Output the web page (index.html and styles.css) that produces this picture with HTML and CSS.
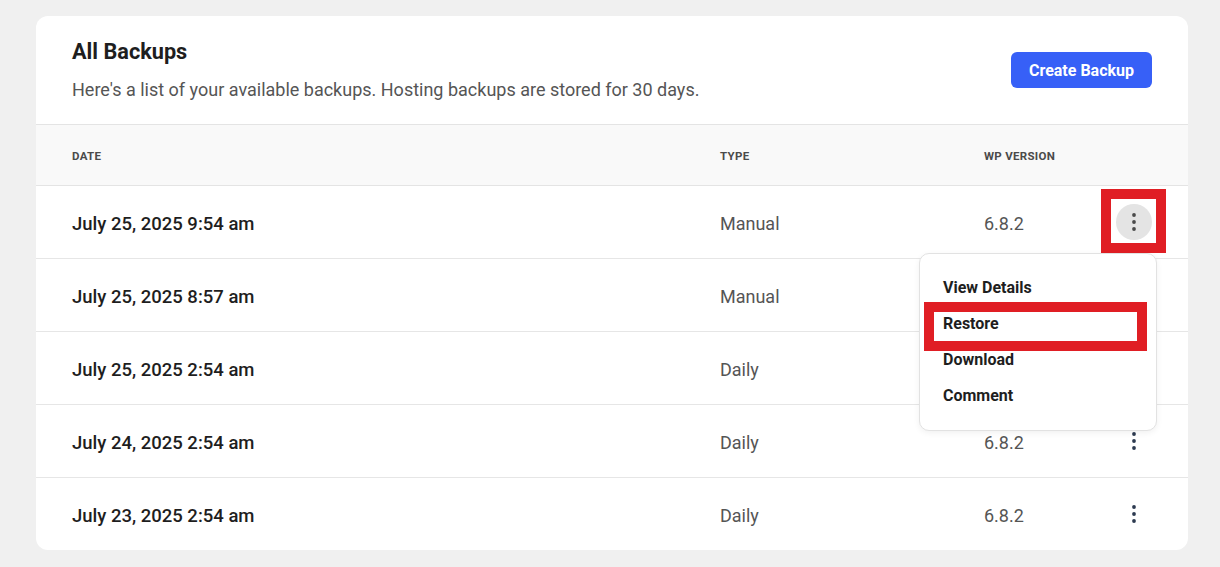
FILE: index.html
```html
<!DOCTYPE html>
<html lang="en">
<head>
<meta charset="utf-8">
<title>All Backups</title>
<link rel="stylesheet" href="styles.css">
</head>
<body>
<main class="card">
  <header class="card-head">
    <div class="head-text">
      <h1 class="title">All Backups</h1>
      <p class="subtitle">Here's a list of your available backups. Hosting backups are stored for 30 days.</p>
    </div>
    <button class="btn-primary" type="button">Create Backup</button>
  </header>

  <div class="table">
    <div class="row row-head">
      <div class="th">Date</div>
      <div class="th">Type</div>
      <div class="th">WP Version</div>
      <div class="th"></div>
    </div>

    <div class="row">
      <div class="cell date">July 25, 2025 9:54 am</div>
      <div class="cell muted">Manual</div>
      <div class="cell muted">6.8.2</div>
      <div class="cell action">
        <div class="action-wrap">
          <button class="kebab is-open" type="button" aria-label="Actions">
            <svg width="4" height="18" viewBox="0 0 4 18"><circle cx="2" cy="2" r="1.9"/><circle cx="2" cy="9" r="1.9"/><circle cx="2" cy="16" r="1.9"/></svg>
          </button>
          <span class="annot annot-kebab"></span>
          <div class="menu">
            <div class="menu-item">View Details</div>
            <div class="menu-item restore">Restore<span class="annot annot-restore"></span></div>
            <div class="menu-item">Download</div>
            <div class="menu-item">Comment</div>
          </div>
        </div>
      </div>
    </div>

    <div class="row">
      <div class="cell date">July 25, 2025 8:57 am</div>
      <div class="cell muted">Manual</div>
      <div class="cell muted">6.8.2</div>
      <div class="cell action">
        <button class="kebab" type="button" aria-label="Actions">
          <svg width="4" height="18" viewBox="0 0 4 18"><circle cx="2" cy="2" r="1.9"/><circle cx="2" cy="9" r="1.9"/><circle cx="2" cy="16" r="1.9"/></svg>
        </button>
      </div>
    </div>

    <div class="row">
      <div class="cell date">July 25, 2025 2:54 am</div>
      <div class="cell muted">Daily</div>
      <div class="cell muted">6.8.2</div>
      <div class="cell action">
        <button class="kebab" type="button" aria-label="Actions">
          <svg width="4" height="18" viewBox="0 0 4 18"><circle cx="2" cy="2" r="1.9"/><circle cx="2" cy="9" r="1.9"/><circle cx="2" cy="16" r="1.9"/></svg>
        </button>
      </div>
    </div>

    <div class="row">
      <div class="cell date">July 24, 2025 2:54 am</div>
      <div class="cell muted">Daily</div>
      <div class="cell muted">6.8.2</div>
      <div class="cell action">
        <button class="kebab" type="button" aria-label="Actions">
          <svg width="4" height="18" viewBox="0 0 4 18"><circle cx="2" cy="2" r="1.9"/><circle cx="2" cy="9" r="1.9"/><circle cx="2" cy="16" r="1.9"/></svg>
        </button>
      </div>
    </div>

    <div class="row">
      <div class="cell date">July 23, 2025 2:54 am</div>
      <div class="cell muted">Daily</div>
      <div class="cell muted">6.8.2</div>
      <div class="cell action">
        <button class="kebab" type="button" aria-label="Actions">
          <svg width="4" height="18" viewBox="0 0 4 18"><circle cx="2" cy="2" r="1.9"/><circle cx="2" cy="9" r="1.9"/><circle cx="2" cy="16" r="1.9"/></svg>
        </button>
      </div>
    </div>
  </div>
</main>
</body>
</html>
```

FILE: styles.css
```css
* { box-sizing: border-box; }

html, body {
  margin: 0;
  padding: 0;
  background: #f0f0f0;
  font-family: Roboto, "Liberation Sans", Arial, sans-serif;
  color: #1e1e1e;
}

body {
  padding: 16px 32px 0 36px;
  height: 567px;
  overflow: hidden;
}

.card {
  background: #fff;
  border-radius: 12px;
  width: 1152px;
  overflow: visible;
}

.card-head {
  display: flex;
  align-items: center;
  justify-content: space-between;
  padding: 24px 36px 22px 36px;
  border-bottom: 1px solid #e4e4e4;
}

.title {
  margin: 0;
  font-size: 21.7px;
  line-height: 24px;
  font-weight: 700;
  color: #1e1e1e;
}

.subtitle {
  margin: 14px 0 0 0;
  font-size: 18px;
  line-height: 24px;
  color: #555;
}

.btn-primary {
  height: 36px;
  padding: 0 18px;
  border: none;
  border-radius: 6px;
  background: #3760f7;
  color: #fff;
  font-family: inherit;
  font-size: 16px;
  font-weight: 700;
  margin-top: -2px;
  cursor: pointer;
}

.table { display: flex; flex-direction: column; }

.row {
  display: grid;
  grid-template-columns: 648px 264px 1fr 36px;
  align-items: center;
  padding: 0 36px;
  height: 73px;
  border-bottom: 1px solid #e6e6e6;
}

.row:last-child {
  border-bottom: none;
  height: 72px;
}

.row-head {
  height: 61px;
  background: #f9f9f9;
  border-bottom: 1px solid #e4e4e4;
}

.th {
  font-size: 11.5px;
  font-weight: 700;
  letter-spacing: 0.3px;
  text-transform: uppercase;
  color: #4a4a4a;
  padding-top: 1px;
}

.cell { font-size: 18px; line-height: 24px; padding-top: 3px; }

.date { font-weight: 500; font-size: 18.5px; color: #1e1e1e; }

.muted { color: #555; }

.action { display: flex; justify-content: center; padding-top: 0; }

.action-wrap { position: relative; width: 36px; height: 36px; }

.kebab {
  width: 36px;
  height: 36px;
  border: none;
  border-radius: 50%;
  background: transparent;
  display: flex;
  align-items: center;
  justify-content: center;
  padding: 0;
  cursor: pointer;
}

.kebab svg { fill: #2c3a50; }

.kebab.is-open { background: #e4e4e4; }
.kebab.is-open svg { fill: #4a4a4a; }

.annot {
  position: absolute;
  border: 10px solid #e01e24;
  pointer-events: none;
}

.annot-kebab {
  top: -15px;
  left: -15px;
  right: -14px;
  bottom: -13px;
}

.menu {
  position: absolute;
  top: 49px;
  right: -5px;
  width: 238px;
  background: #fff;
  border: 1px solid #e2e2e2;
  border-radius: 10px;
  box-shadow: 0 2px 6px rgba(0, 0, 0, 0.06);
  padding: 16px 0 16px 0;
  z-index: 5;
}

.menu-item {
  position: relative;
  height: 36px;
  line-height: 36px;
  padding: 0 23px;
  font-size: 16px;
  font-weight: 700;
  color: #1e1e1e;
}

.annot-restore {
  top: -4px;
  left: 4px;
  right: 9px;
  bottom: -9px;
}
```
